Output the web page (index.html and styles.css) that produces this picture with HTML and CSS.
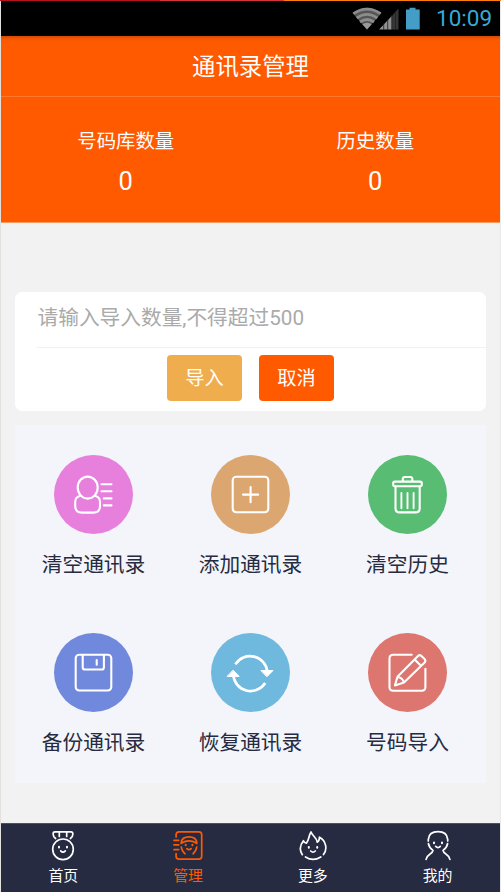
FILE: index.html
```html
<!DOCTYPE html>
<html lang="zh-CN">
<head>
<meta charset="utf-8">
<title>通讯录管理</title>
<link rel="stylesheet" href="styles.css">
</head>
<body>
<div class="strip"></div>
<div class="phone">
  <div class="status">
    <svg class="status-icons" width="72" height="24" viewBox="0 0 72 24">
      <path d="M0.5 6Q15 -4.5 29.5 6L15 22.5Z" fill="#555"/>
      <g fill="none" stroke="#8c8c8c" stroke-width="2.8">
        <path d="M1.4 6.7Q15 -2.5 28.6 6.7"/>
        <path d="M4.7 11Q15 3.8 25.3 11"/>
        <path d="M8 15Q15 10 22 15"/>
      </g>
      <path d="M10.3 17.3Q15 14 19.7 17.3L15 22.5Z" fill="#999"/>
      <path d="M27 22.5L40 8.8V22.5Z" fill="#929292"/>
      <path d="M40 8.8L46.5 1.5V22.5H40Z" fill="#363636"/>
      <path d="M31.7 16V23M35.7 12V23M39.7 8V23M43.5 4V23" stroke="#202020" stroke-width=".8"/>
      <path d="M54 2.5h3.5V0.8h6v1.7h4.2v20H54Z" fill="#439dc6"/>
    </svg>
    <span class="clock">10:09</span>
  </div>
  <header class="title">通讯录管理</header>
  <section class="stats">
    <div class="stat"><span>号码库数量</span><b>0</b></div>
    <div class="stat"><span>历史数量</span><b>0</b></div>
  </section>
  <main class="content">
    <form class="import">
      <div class="field">请输入导入数量,不得超过500</div>
      <div class="actions">
        <button type="button" class="btn btn-import">导入</button>
        <button type="button" class="btn btn-cancel">取消</button>
      </div>
    </form>
    <section class="grid">
      <div class="item">
        <svg class="disc pink" viewBox="0 0 79 79">
          <ellipse cx="33.7" cy="32.6" rx="10" ry="11"/>
          <path d="M26.5 40.8C23 41.5 21.2 43.5 21.2 47V51Q21.2 57.6 27.8 57.6H39.5Q46 57.6 46 51V47C46 43.5 44.4 41.5 40.8 40.8"/>
          <path d="M47.5 29.2H57.5M47.5 36.3H57.5M49.8 43.4H57.5M49.8 50.4H57.5"/>
        </svg>
        <span>清空通讯录</span>
      </div>
      <div class="item">
        <svg class="disc tan" viewBox="0 0 79 79">
          <rect x="21.7" y="21.7" width="35.6" height="35.6" rx="3.5"/>
          <path d="M32 39.6H47.2M39.6 32V47.2"/>
        </svg>
        <span>添加通讯录</span>
      </div>
      <div class="item">
        <svg class="disc green" viewBox="0 0 79 79">
          <path d="M34.8 26V24Q34.8 22 36.8 22H42.3Q44.3 22 44.3 24V26"/>
          <rect x="25.2" y="26.6" width="28.6" height="4.6" rx="1.6"/>
          <path d="M27.5 31.5V53.2Q27.5 57.4 31.7 57.4H47.5Q51.7 57.4 51.7 53.2V31.5"/>
          <path class="fine" d="M33.4 38V53.2M39.5 38V53.2M45.6 38V53.2"/>
        </svg>
        <span>清空历史</span>
      </div>
      <div class="item">
        <svg class="disc blue" viewBox="0 0 79 79">
          <rect x="21.7" y="21.7" width="35.6" height="35.8" rx="3.5"/>
          <path d="M28.7 22V34.2Q28.7 36.5 31 36.5H47.6Q49.9 36.5 49.9 34.2V22"/>
          <path d="M42.7 27V31.7"/>
        </svg>
        <span>备份通讯录</span>
      </div>
      <div class="item">
        <svg class="disc sky" viewBox="0 0 79 79">
          <path class="bold" d="M24.4 31.4A17.3 17.3 0 0 1 56.3 38.5M22.3 41.5A17.3 17.3 0 0 0 54.2 50"/>
          <path class="solid" d="M50.3 37.5H62L56.1 43.5ZM16.5 43.4H28.2L22.3 37.4Z"/>
        </svg>
        <span>恢复通讯录</span>
      </div>
      <div class="item">
        <svg class="disc red" viewBox="0 0 79 79">
          <path d="M43.7 21.7H25.2Q21.5 21.7 21.5 25.4V54Q21.5 57.7 25.2 57.7H53.7Q57.4 57.7 57.4 54V35.7"/>
          <path d="M26.9 52.5L29.5 43.8L50 22.9Q51.7 21.2 53.4 22.9L56.6 26.1Q58.2 27.8 56.6 29.4L36 49.6ZM46.6 26.4L53 32.8M29.8 44Q34.6 44.7 35.8 49.3"/>
        </svg>
        <span>号码导入</span>
      </div>
    </section>
  </main>
  <nav class="tabs">
    <div class="tab">
      <svg viewBox="0 0 32 32">
        <circle cx="16" cy="19.3" r="10.3"/>
        <path d="M8.6 8.5Q6.2 6.7 6.2 4.5V3.5Q6.2 1.8 8 1.8H24Q25.8 1.8 25.8 3.5V4.5Q25.8 6.7 23.4 8.5M12.3 2V6.5M19.7 2V6.5M13.7 20.9Q16 23.4 18.3 20.9"/>
        <path class="eyes" d="M12 16.8V17.6M20 16.8V17.6"/>
      </svg>
      <span>首页</span>
    </div>
    <div class="tab active">
      <svg viewBox="0 0 32 32">
        <path d="M4.1 7V4.7Q4.1 1.8 7 1.8H26.8Q29.7 1.8 29.7 4.7V26.3Q29.7 29.2 26.8 29.2H7Q4.1 29.2 4.1 26.3V23.5M2 10.3H6.7M2 14.9H6.7M2 19.6H6.7"/>
        <path d="M9.2 13.5V12.5Q10 6.8 17 6.8Q24 6.8 24.8 12.5V13.5M10.2 12.8Q13 10.8 17 10.8Q21 10.8 23.8 12.8M9.3 17Q9.8 21.2 13 23.8M24.7 17Q24.2 21.2 21 23.8M14.8 18.6Q17 20.8 19.2 18.6"/>
        <path class="eyes" d="M13.7 14.8V15.3M20.4 14.8V15.3"/>
      </svg>
      <span>管理</span>
    </div>
    <div class="tab">
      <svg viewBox="0 0 32 32">
        <path d="M5.3 24.7C2.4 20.3 3.2 14.8 6.4 10.7Q7.2 13 9.4 13.2C12.2 9.8 11.8 5 14 1.9C14.8 5.5 19.8 7.2 20.2 12.2Q22.5 11 22.4 7.2C29.4 10.8 30.5 19.5 26.5 24.6M8.5 27Q16 31.9 23.8 27M13.7 21Q16 23.4 18.3 21"/>
        <path class="eyes" d="M11.8 16.9V17.7M20.2 16.9V17.7"/>
      </svg>
      <span>更多</span>
    </div>
    <div class="tab">
      <svg viewBox="0 0 32 32">
        <path d="M6.3 11V9.3Q7 1.7 16 1.7Q25 1.7 25.7 9.3V11M6.4 13.5Q7 17.5 11 20.4C10.4 24.5 5.3 23.5 4.1 29.3M25.6 13.5Q25 17.5 21 20.4C21.6 24.5 26.7 23.5 27.9 29.3M13.7 16.4Q16 18.8 18.3 16.4"/>
        <path class="eyes" d="M12 12.4V13.2M20 12.4V13.2"/>
      </svg>
      <span>我的</span>
    </div>
  </nav>
</div>
</body>
</html>
```
FILE: styles.css
```css
* { box-sizing: border-box; }

body {
  margin: 0;
  width: 501px;
  height: 892px;
  overflow: hidden;
  background: #f2f2f2;
  font-family: Roboto, "Noto Sans CJK SC", sans-serif;
}

.strip {
  height: 1px;
  background: linear-gradient(to right, #b81222 0 160px, #d8323a 160px 284px, #ff7c10 284px);
}

.phone {
  display: flex;
  flex-direction: column;
  height: 891px;
  border-left: 1px solid #e2e1dd;
  border-right: 1px solid #e9e9e9;
}

.status {
  display: flex;
  justify-content: flex-end;
  align-items: center;
  height: 35px;
  padding-right: 8px;
  background: #000;
}

.status-icons { margin-right: 12px; }

.clock {
  width: 56px;
  font-size: 22.5px;
  line-height: 37px;
  text-align: right;
  white-space: nowrap;
  color: #36a9d5;
}

.title {
  height: 61px;
  border-bottom: 1px solid #ff7930;
  background: linear-gradient(#d44b00, #f75700 3px, #ff5a00 6px);
  color: #fff;
  font-size: 23.4px;
  line-height: 62px;
  text-align: center;
}

.stats {
  display: flex;
  height: 126px;
  padding-top: 30px;
  border-bottom: 1px solid #ff9b62;
  background: #ff5a00;
  color: #fff;
}

.stat {
  flex: 1;
  display: flex;
  flex-direction: column;
  align-items: center;
}

.stat span { font-size: 19.4px; line-height: 30px; }
.stat b { margin-top: 9px; font-size: 25.5px; font-weight: 400; line-height: 30px; }

.content { flex: 1; padding: 69px 14px 0 14px; }

.import {
  height: 119px;
  padding-left: 21px;
  border-radius: 7px;
  background: #fff;
}

.field {
  height: 56px;
  padding-left: 1.5px;
  border-bottom: 1px solid #f1f1f1;
  color: #aaa;
  font-size: 20.7px;
  line-height: 53px;
}

.actions {
  display: flex;
  justify-content: center;
  gap: 17px;
  padding: 7px 21px 0 0;
}

.btn {
  width: 75px;
  height: 46px;
  padding: 2px 0 0;
  border: 0;
  border-radius: 4px;
  color: #fff;
  font-family: inherit;
  font-size: 19.2px;
  line-height: 44px;
}

.btn-import { background: #f0ad4e; }
.btn-cancel { background: #ff5a00; }

.grid {
  display: grid;
  grid-template-columns: repeat(3, 1fr);
  grid-auto-rows: 178px;
  height: 358px;
  margin-top: 14px;
  padding-top: 30px;
  background: #f3f5fa;
}

.item {
  display: flex;
  flex-direction: column;
  align-items: center;
  color: #262b41;
  font-size: 20.7px;
  line-height: 30px;
}

.item span { margin-top: 16px; }

.disc {
  width: 79px;
  height: 79px;
  border-radius: 50%;
  fill: none;
  stroke: #fff;
  stroke-width: 2.1;
  stroke-linecap: round;
  stroke-linejoin: round;
}

.disc .fine { stroke-width: 1.9; }
.disc .bold { stroke-width: 2.7; stroke-linecap: butt; }
.disc .solid { fill: #fff; stroke-width: 1; }

.pink { background: #e680dc; }
.tan { background: #dca670; }
.green { background: #58bc73; }
.blue { background: #7089dc; }
.sky { background: #70b9de; }
.red { background: #de7670; }

.tabs {
  display: flex;
  height: 69px;
  border-top: 1px solid #4b5065;
  background: #262b41;
}

.tab {
  flex: 1;
  display: flex;
  flex-direction: column;
  align-items: center;
  padding-top: 6px;
  color: #fff;
  font-size: 14.9px;
  line-height: 20px;
}

.tab svg {
  width: 32px;
  height: 32px;
  fill: none;
  stroke: currentColor;
  stroke-width: 1.7;
  stroke-linecap: round;
  stroke-linejoin: round;
}

.tab .eyes { stroke-width: 2; }
.tab span { margin-top: 4px; }
.active { color: #ff5a00; }
```
